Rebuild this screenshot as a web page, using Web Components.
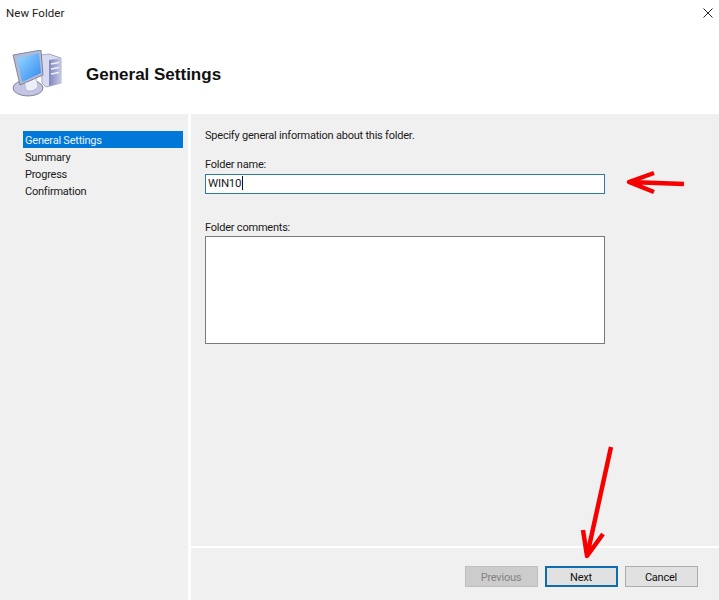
<!DOCTYPE html>
<html>
<head>
<meta charset="utf-8">
<title>New Folder</title>
<style>
  html, body { margin: 0; padding: 0; background: #f0f0f0; }
  body { font-family: Roboto, "Noto Sans", sans-serif; font-size: 11px; letter-spacing: -0.22px; color: #111; }
</style>
</head>
<body>
<wizard-dialog>
  <span slot="title">New Folder</span>
  <span slot="heading">General Settings</span>
  <wizard-step slot="steps" selected>General Settings</wizard-step>
  <wizard-step slot="steps">Summary</wizard-step>
  <wizard-step slot="steps">Progress</wizard-step>
  <wizard-step slot="steps">Confirmation</wizard-step>
  <folder-form></folder-form>
  <wizard-button slot="buttons" disabled>Previous</wizard-button>
  <wizard-button slot="buttons" primary>Next</wizard-button>
  <wizard-button slot="buttons">Cancel</wizard-button>
</wizard-dialog>

<script>
// wizard-step: one row of the left hand list
class WizardStep extends HTMLElement {
  constructor() {
    super();
    this.attachShadow({ mode: 'open' });
    this.shadowRoot.innerHTML = `
      <style>
        :host {
          display: block;
          height: 17px;
          line-height: 19px;
          padding-left: 2px;
          white-space: nowrap;
          color: #1a1a1a;
        }
        :host([selected]) {
          background: #0078d7;
          color: #e8f3fc;
        }
      </style>
      <slot></slot>
    `;
  }
}

// wizard-button: the flat buttons of the bottom bar
class WizardButton extends HTMLElement {
  constructor() {
    super();
    this.attachShadow({ mode: 'open' });
    this.shadowRoot.innerHTML = `
      <style>
        :host {
          display: flex;
          align-items: center;
          justify-content: center;
          box-sizing: border-box;
          width: 73px;
          height: 21px;
          padding: 1px 1px 0 0;
          background: #e1e1e1;
          border: 1px solid #adadad;
          color: #111;
        }
        :host([primary]) {
          border: 2px solid #0f6cb0;
        }
        :host([disabled]) {
          background: #cccccc;
          border-color: #bfbfbf;
          color: #838383;
        }
      </style>
      <slot></slot>
    `;
  }
}

// folder-form: the fields on the right hand page
class FolderForm extends HTMLElement {
  constructor() {
    super();
    this.attachShadow({ mode: 'open' });
    this.shadowRoot.innerHTML = `
      <style>
        :host {
          display: flex;
          flex-direction: column;
          padding: 13px 0 0 14px;
          color: #1a1a1a;
        }
        .line { height: 16px; line-height: 18px; white-space: nowrap; }
        .intro { margin-bottom: 13px; }
        .name {
          box-sizing: border-box;
          width: 400px;
          height: 20px;
          line-height: 16px;
          margin-top: 2px;
          padding-left: 2px;
          background: #fff;
          border: 1px solid #2b7c9f;
          white-space: nowrap;
          font-size: 11.5px;
        }
        .caret {
          display: inline-block;
          width: 1px;
          height: 14px;
          margin-left: 1px;
          background: #111;
          vertical-align: -3px;
        }
        .comments-label { margin-top: 25px; }
        .comments {
          box-sizing: border-box;
          width: 400px;
          height: 108px;
          margin-top: 1px;
          background: #fff;
          border: 1px solid #7a7a7a;
        }
      </style>
      <div class="line intro">Specify general information about this folder.</div>
      <div class="line">Folder name:</div>
      <div class="name">WIN10<span class="caret"></span></div>
      <div class="line comments-label">Folder comments:</div>
      <div class="comments"></div>
    `;
  }
}

// wizard-dialog: header, step list, page and button bar
class WizardDialog extends HTMLElement {
  constructor() {
    super();
    this.attachShadow({ mode: 'open' });
    this.shadowRoot.innerHTML = `
      <style>
        :host {
          display: flex;
          flex-direction: column;
          position: relative;
          width: 719px;
          height: 600px;
          overflow: hidden;
          background: #f0f0f0;
        }
        header {
          flex: 0 0 114px;
          box-sizing: border-box;
          background: #fff;
          display: flex;
          flex-direction: column;
        }
        .titlebar {
          display: flex;
          align-items: center;
          justify-content: space-between;
          height: 26px;
          padding: 0 5px 0 6px;
          color: #222;
          font-size: 11.5px;
          letter-spacing: 0.05px;
        }
        .banner {
          display: flex;
          align-items: center;
          gap: 23px;
          padding: 24px 0 0 11px;
        }
        .heading {
          font: bold 17px "Liberation Sans", Arial, sans-serif;
          letter-spacing: 0;
          color: #111;
          margin-top: 2px;
        }
        .middle { flex: 1; display: flex; min-height: 0; }
        nav {
          flex: 0 0 160px;
          padding: 17px 5px 0 23px;
          border-right: 3px solid #fff;
          box-sizing: content-box;
          width: 160px;
        }
        .page { flex: 1; display: flex; flex-direction: column; }
        .content { flex: 1; }
        .buttons {
          flex: 0 0 54px;
          display: flex;
          justify-content: flex-end;
          gap: 7px;
          padding: 18px 21px 0 0;
          box-sizing: border-box;
          border-top: 2px solid #fff;
        }
        .overlay { position: absolute; left: 0; top: 0; pointer-events: none; }
      </style>
      <header>
        <div class="titlebar">
          <slot name="title"></slot>
          <svg width="12" height="12" viewBox="0 0 12 12">
            <path d="M1.5 1.5 L10.5 10.5 M10.5 1.5 L1.5 10.5" stroke="#222" stroke-width="1" fill="none"/>
          </svg>
        </div>
        <div class="banner">
          <svg width="52" height="48" viewBox="0 0 52 48">
            <defs>
              <linearGradient id="screen" x1="0" y1="0" x2="1" y2="1">
                <stop offset="0" stop-color="#9adcff"/>
                <stop offset="1" stop-color="#2f86f2"/>
              </linearGradient>
              <linearGradient id="tower" x1="0" y1="0" x2="1" y2="0">
                <stop offset="0" stop-color="#7f86b8"/>
                <stop offset="1" stop-color="#c4c8ea"/>
              </linearGradient>
            </defs>
            <path d="M30 5 L38 4 L50 8 L50 33 L35 37 L31 33 Z" fill="#d7daf0" stroke="#8a8fa8" stroke-width=".7"/>
            <path d="M38 10 L50 8 L50 33 L38 36 Z" fill="url(#tower)"/>
            <path d="M40 14 L48 12.5 M40 19 L48 17.5 M40 24 L48 22.5" stroke="#eef0fb" stroke-width="1.5"/>
            <ellipse cx="17" cy="38" rx="15" ry="8" fill="#c3c5e2" stroke="#6f7288" stroke-width=".8"/>
            <path d="M13 30 L25 27 L27 37 Q21 43 15 40 Z" fill="#eceef9" stroke="#9a9db8" stroke-width=".5"/>
            <path d="M2 5 L30 0 L32 25 L9 35 Z" fill="#b4b9d6" stroke="#6f748c" stroke-width=".8"/>
            <path d="M6 8 L28 3 L30 23 L11 32 Z" fill="url(#screen)"/>
          </svg>
          <span class="heading"><slot name="heading"></slot></span>
        </div>
      </header>
      <div class="middle">
        <nav><slot name="steps"></slot></nav>
        <div class="page">
          <div class="content"><slot></slot></div>
          <div class="buttons"><slot name="buttons"></slot></div>
        </div>
      </div>
      <!-- red annotation arrows drawn over the dialog -->
      <svg class="overlay" width="719" height="600" viewBox="0 0 719 600">
        <g fill="none" stroke="#f60000" stroke-width="4.5" stroke-linecap="butt" stroke-linejoin="round">
          <path d="M684 184 L629 182 M654 173 L629 182 L654 192"/>
          <path d="M611 447 L587 556 M583 530 L587 556 L603 534"/>
        </g>
      </svg>
    `;
  }
}

customElements.define('wizard-step', WizardStep);
customElements.define('wizard-button', WizardButton);
customElements.define('folder-form', FolderForm);
customElements.define('wizard-dialog', WizardDialog);
</script>
</body>
</html>
